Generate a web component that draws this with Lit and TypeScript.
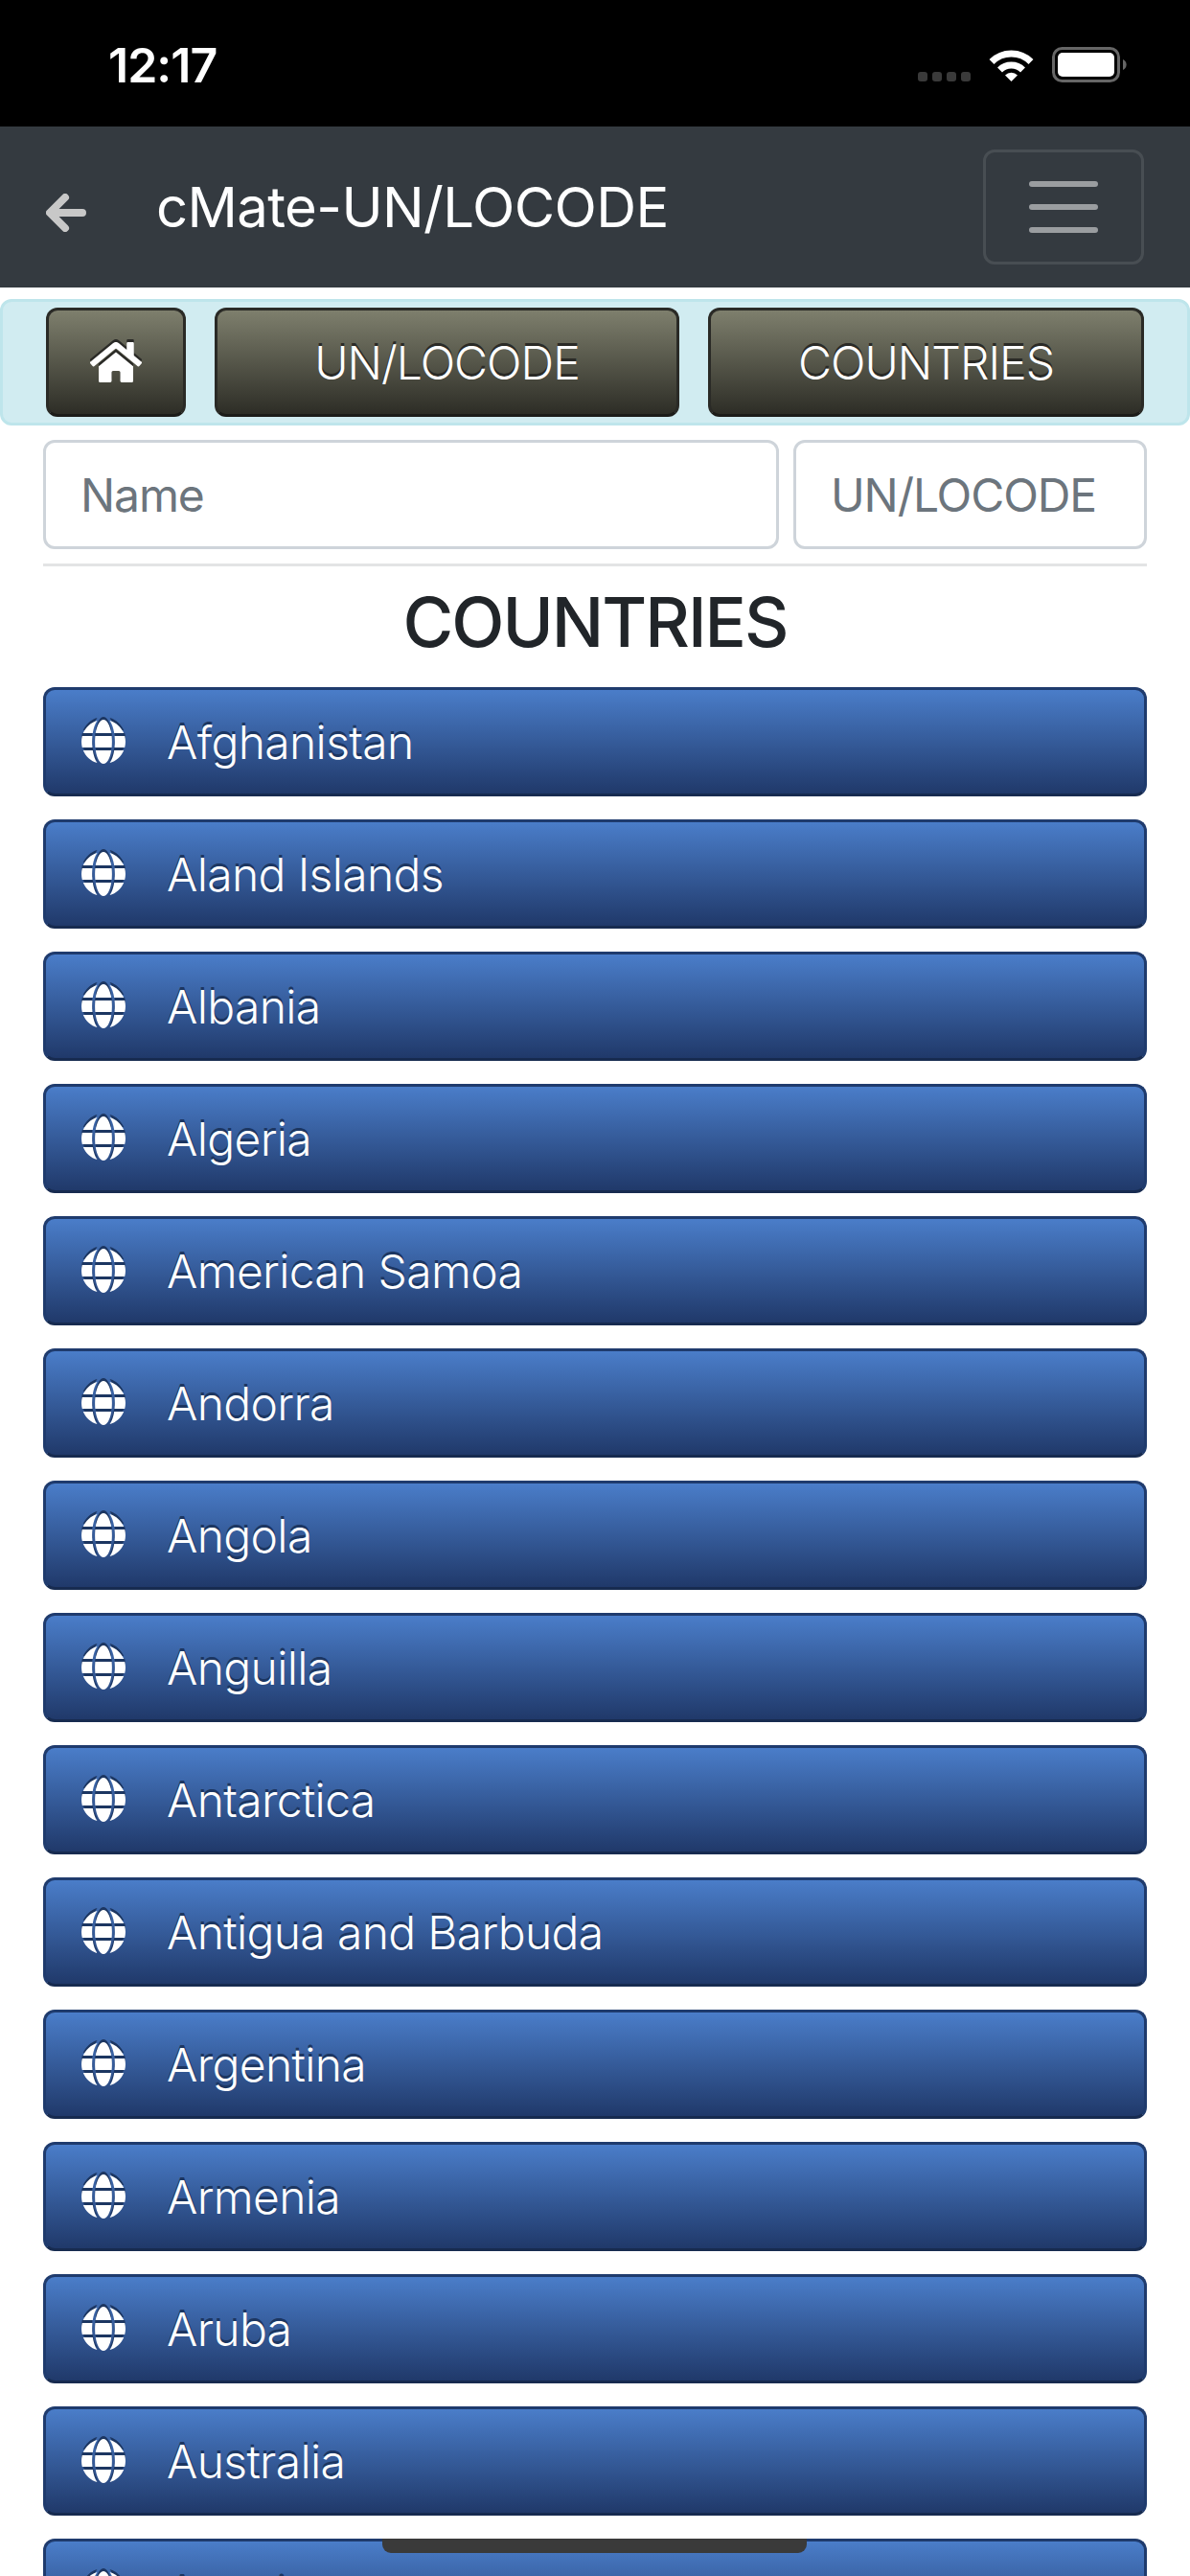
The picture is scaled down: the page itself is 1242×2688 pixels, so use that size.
import { LitElement, html, css, svg } from "lit";
import { customElement } from "lit/decorators.js";

const COUNTRIES = ["Afghanistan","Aland Islands","Albania","Algeria","American Samoa","Andorra","Angola","Anguilla","Antarctica","Antigua and Barbuda","Argentina","Armenia","Aruba","Australia","Austria"];

const globe = svg`<path d="M336.5 160C322 70.7 287.8 8 248 8s-74 62.7-88.5 152h177zM152 256c0 22.2 1.2 43.5 3.3 64h185.3c2.1-20.5 3.3-41.8 3.3-64s-1.2-43.5-3.3-64H155.3c-2.1 20.5-3.3 41.8-3.3 64zm324.7-96c-28.6-67.9-86.5-120.4-158-141.6 24.4 33.8 41.2 84.7 50 141.6h108zM177.2 18.4C105.8 39.6 47.8 92.1 19.3 160h108c8.7-56.9 25.5-107.8 49.9-141.6zM487.4 192H372.7c2.1 21 3.3 42.5 3.3 64s-1.2 43-3.3 64h114.6c5.5-20.5 8.6-41.8 8.6-64s-3.1-43.5-8.5-64zM120 256c0-21.5 1.2-43 3.3-64H8.6C3.2 212.5 0 233.8 0 256s3.2 43.5 8.6 64h114.6c-2-21-3.2-42.5-3.2-64zm39.5 96c14.5 89.3 48.7 152 88.5 152s74-62.7 88.5-152h-177zm159.3 141.6c71.4-21.2 129.4-73.7 158-141.6h-108c-8.8 56.9-25.6 107.8-50 141.6zM19.3 352c28.6 67.9 86.5 120.4 158 141.6-24.4-33.8-41.2-84.7-50-141.6h-108z"/>`;
const home = svg`<path d="M280.37 148.26L96 300.11V464a16 16 0 0 0 16 16l112.06-.29a16 16 0 0 0 15.92-16V368a16 16 0 0 1 16-16h64a16 16 0 0 1 16 16v95.64a16 16 0 0 0 16 16.05L464 480a16 16 0 0 0 16-16V300L295.67 148.26a12.19 12.19 0 0 0-15.3 0zM571.6 251.47L488 182.56V44.05a12 12 0 0 0-12-12h-56a12 12 0 0 0-12 12v72.61L318.47 43a48 48 0 0 0-61 0L4.34 251.47a12 12 0 0 0-1.6 16.9l25.5 31A12 12 0 0 0 45.15 301l235.22-193.74a12.19 12.19 0 0 1 15.3 0L530.9 301a12 12 0 0 0 16.9-1.6l25.5-31a12 12 0 0 0-1.7-16.93z"/>`;

@customElement("app-root")
export class AppRoot extends LitElement {
  static styles = css`
    :host { display: block; position: relative; width: 1242px; height: 2688px; overflow: hidden; background: #fff; font-family: Inter, "Liberation Sans", sans-serif; color: #212529; }
    * { box-sizing: border-box; }
    .status { height: 132px; background: #000; display: flex; align-items: flex-start; padding: 0 65px 0 113px; color: #fff; }
    .time { font-size: 50px; font-weight: 600; line-height: 36px; margin-top: 50px; letter-spacing: -1px; }
    .status-right { margin-left: auto; display: flex; align-items: flex-start; }
    .dots { display: flex; gap: 5px; margin-top: 75px; margin-right: 19px; }
    .dot { width: 10px; height: 10px; border-radius: 3px; background: #3a3a3a; }
    .wifi { width: 47px; height: 36px; margin-top: 50px; margin-right: 19px; display: block; }
    .battery { width: 79px; height: 37px; margin-top: 49px; display: block; }
    .nav { height: 168px; background: #343a40; display: flex; align-items: center; padding: 0 48px; }
    .back { width: 42px; height: 40px; margin-top: 12px; display: block; }
    .brand { color: #fff; font-size: 58px; line-height: 70px; margin-left: 73px; letter-spacing: -0.6px; }
    .toggler { margin-left: auto; width: 168px; height: 120px; border: 3px solid rgba(255,255,255,.1); border-radius: 12px; display: flex; flex-direction: column; align-items: center; justify-content: center; gap: 18px; }
    .toggler span { width: 72px; height: 6px; border-radius: 3px; background: rgba(255,255,255,.5); }
    .alert { margin-top: 12px; height: 132px; border: 3px solid #bee5eb; border-radius: 12px; background: #d1ecf1; padding: 6px 45px 0; display: grid; grid-template-columns: 146px 485px 1fr; gap: 30px; }
    .btn { height: 114px; border: 3px solid #2a2a26; border-bottom-color: #1c1c19; border-radius: 12px; background: linear-gradient(#7e7f6d, #2d2d26); color: #fff; font-size: 48px; font-weight: 360; display: flex; align-items: center; justify-content: center; text-shadow: 0 -3px 0 #2a2a26; letter-spacing: -0.95px; }
    .btn svg { width: 54px; height: 48px; fill: #fff; filter: drop-shadow(0 -3px 0 #2a2a26); }
    .inputs { margin: 15px 45px 0; display: flex; gap: 15px; }
    input { height: 114px; min-width: 0; border: 3px solid #ced4da; border-radius: 12px; padding: 0 36px; font: 48px Inter, "Liberation Sans", sans-serif; background: #fff; outline: none; letter-spacing: -1.1px; }
    input::placeholder { color: #6c757d; opacity: 1; }
    .name { flex: 1; }
    .code { width: 369px; }
    .rule { margin: 15px 45px 0; height: 3px; background: #e3e4e5; }
    h2 { margin: 0; height: 126px; font-size: 72px; font-weight: 500; line-height: 116px; text-align: center; letter-spacing: -2px; }
    .list { margin: 0 45px; display: flex; flex-direction: column; gap: 24px; }
    .row { height: 114px; flex: none; border: 3px solid #1f3b6d; border-bottom-color: #172b50; border-radius: 12px; background: linear-gradient(#4a7dc9, #20396a); color: #fff; font-size: 48px; font-weight: 360; display: flex; align-items: center; padding-left: 37px; text-shadow: 0 -3px 0 #1c3661; letter-spacing: -0.65px; }
    .row svg { width: 46px; height: 48px; fill: #fff; flex: none; filter: drop-shadow(0 -3px 0 #1c3661); }
    .row span { margin-left: 43px; }
    .indicator { position: absolute; left: 399px; top: 2649px; width: 443px; height: 15px; border-radius: 0 0 9px 9px; background: #3a3a3a; }
  `;

  render() {
    return html`
      <div class="status">
        <div class="time">12:17</div>
        <div class="status-right">
          <div class="dots"><i class="dot"></i><i class="dot"></i><i class="dot"></i><i class="dot"></i></div>
          <svg class="wifi" viewBox="0 0 47 36">
            <path d="M3 14.5A29 29 0 0 1 44 14.5M11.5 23A17 17 0 0 1 35.5 23" fill="none" stroke="#fff" stroke-width="7"/>
            <path d="M23.5 35L17 28.5A9.2 9.2 0 0 1 30 28.5Z" fill="#fff"/>
          </svg>
          <svg class="battery" viewBox="0 0 79 37">
            <rect x="1.5" y="1.5" width="68" height="34" rx="9" fill="none" stroke="#666" stroke-width="3"/>
            <rect x="6" y="6" width="59" height="25" rx="5" fill="#fff"/>
            <path d="M74 13A6 6 0 0 1 74 24Z" fill="#666"/>
          </svg>
        </div>
      </div>
      <div class="nav">
        <svg class="back" viewBox="0 0 42 40"><path d="M38 20H6M20 4L4 20L20 36" fill="none" stroke="#c8c8c8" stroke-width="8" stroke-linecap="round" stroke-linejoin="round"/></svg>
        <div class="brand">cMate-UN/LOCODE</div>
        <div class="toggler"><span></span><span></span><span></span></div>
      </div>
      <div class="alert">
        <div class="btn"><svg viewBox="0 0 576 512">${home}</svg></div>
        <div class="btn">UN/LOCODE</div>
        <div class="btn">COUNTRIES</div>
      </div>
      <div class="inputs">
        <input class="name" placeholder="Name" />
        <input class="code" placeholder="UN/LOCODE" />
      </div>
      <div class="rule"></div>
      <h2>COUNTRIES</h2>
      <div class="list">
        ${COUNTRIES.map((c) => html`<div class="row"><svg viewBox="0 0 496 512">${globe}</svg><span>${c}</span></div>`)}
      </div>
      <div class="indicator"></div>
    `;
  }
}
